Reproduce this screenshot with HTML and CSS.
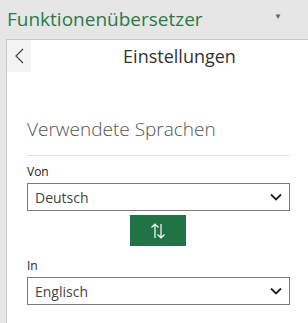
FILE: index.html
```html
<!DOCTYPE html>
<html lang="de">
<head>
    <meta charset="UTF-8">
    <title>Funktionenübersetzer</title>
    <link rel="stylesheet" href="styles.css">
</head>
<body>
    <!-- Kopfzeile des Add-ins -->
    <div class="app-header">
        <span class="app-title">Funktionenübersetzer</span>
        <span class="app-menu">&#9660;</span>
    </div>

    <div class="panel">
        <div class="panel-header">
            <button class="back-btn" aria-label="Zurück">
                <svg width="9" height="16" viewBox="0 0 9 16">
                    <path d="M8 1 L1 8 L8 15" fill="none" stroke="#444" stroke-width="1.2"/>
                </svg>
            </button>
            <div class="panel-title">Einstellungen</div>
        </div>

        <div class="panel-body">
            <h2 class="section-title">Verwendete Sprachen</h2>

            <label class="field-label">Von</label>
            <div class="select-box">
                <span>Deutsch</span>
                <svg class="chev" width="12" height="8" viewBox="0 0 12 8">
                    <path d="M1 1.5 L6 6.5 L11 1.5" fill="none" stroke="#222" stroke-width="1.8"/>
                </svg>
            </div>

            <div class="swap-row">
                <button class="swap-btn" aria-label="Tauschen">
                    <svg width="16" height="18" viewBox="0 0 16 18">
                        <path d="M5 16 V2 M1.5 5.5 L5 2 L8.5 5.5" fill="none" stroke="#fff" stroke-width="1.2"/>
                        <path d="M11 2 V16 M7.5 12.5 L11 16 L14.5 12.5" fill="none" stroke="#fff" stroke-width="1.2"/>
                    </svg>
                </button>
            </div>

            <label class="field-label field-label-gap">In</label>
            <div class="select-box">
                <span>Englisch</span>
                <svg class="chev" width="12" height="8" viewBox="0 0 12 8">
                    <path d="M1 1.5 L6 6.5 L11 1.5" fill="none" stroke="#222" stroke-width="1.8"/>
                </svg>
            </div>
        </div>
    </div>
</body>
</html>
```

FILE: styles.css
```css
html, body {
    height: 100%;
}
body {
    margin: 0;
    background: #e6e6e6;
    font-family: "Open Sans", "Noto Sans", sans-serif;
    display: flex;
    flex-direction: column;
    overflow: hidden;
}
.app-header {
    height: 39px;
    display: flex;
    align-items: center;
    justify-content: space-between;
    padding: 0 26px 0 7px;
    box-sizing: border-box;
}
.app-title {
    color: #2a7a4b;
    font-size: 19px;
    margin-top: -2px;
}
.app-menu {
    color: #666;
    font-size: 8px;
    margin-top: -9px;
}
.panel {
    flex: 1;
    margin-left: 6px;
    background: #fff;
    border-top: 1px solid #c8c8c8;
    border-left: 1px solid #c8c8c8;
}
.panel-header {
    display: flex;
    height: 32px;
}
.back-btn {
    width: 24px;
    height: 32px;
    border: none;
    padding: 0;
    background: #f3f3f3;
    display: flex;
    align-items: center;
    justify-content: center;
}
.panel-title {
    flex: 1;
    text-align: center;
    padding-left: 20px;
    font-size: 18px;
    color: #333;
    line-height: 32px;
}
.panel-body {
    padding: 0 18px 0 20px;
}
.section-title {
    margin: 44px 0 0;
    font-size: 19px;
    font-weight: 300;
    color: #555;
    padding-bottom: 13px;
    border-bottom: 1px solid #e3e3e3;
    line-height: 26px;
}
.field-label {
    display: block;
    font-size: 12px;
    color: #222;
    margin-top: 8px;
    line-height: 16px;
    margin-bottom: 3px;
}
.field-label-gap {
    margin-top: 12px;
}
.select-box {
    height: 28px;
    border: 1px solid #7a7a7a;
    box-sizing: border-box;
    display: flex;
    align-items: center;
    justify-content: space-between;
    padding: 0 7px 0 7px;
    font-size: 14px;
    color: #444;
}
.swap-row {
    display: flex;
    justify-content: center;
    padding-top: 4px;
    margin-right: 2px;
}
.swap-btn {
    width: 56px;
    height: 31px;
    border: none;
    background: #217346;
    display: flex;
    align-items: center;
    justify-content: center;
}
```
